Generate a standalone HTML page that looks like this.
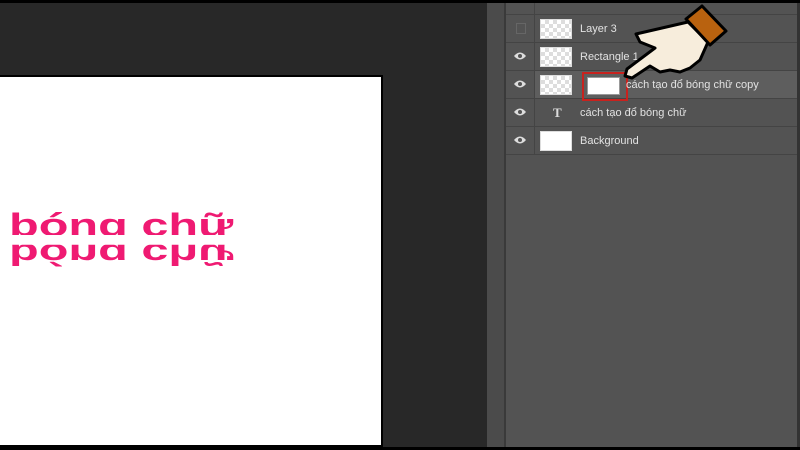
<!DOCTYPE html>
<html><head><meta charset="utf-8"><style>
*{margin:0;padding:0;box-sizing:border-box}
body{width:800px;height:450px;overflow:hidden;background:#000;position:relative;font-family:"Liberation Sans",sans-serif}
.a{position:absolute}
.row{position:absolute;left:506px;width:291px;height:28px;border-bottom:1px solid #444}
.eye{position:absolute;left:0;top:0;width:29px;height:27px;border-right:1px solid #444}
.th{position:absolute;top:4px;width:32px;height:20px;border:1px solid #ddd;background:
repeating-conic-gradient(#ddd 0 25%,#fff 0 50%) 0 0/8px 8px}
.lbl{position:absolute;left:74px;top:8px;color:#e2e2e2;font-size:11px;white-space:nowrap}
.bt{position:absolute;left:9px;top:209px;color:#ef1a72;font-weight:bold;font-size:32px;line-height:32px;white-space:nowrap}
</style></head><body>
<div class="a" style="left:0;top:3px;width:487px;height:444px;background:#282828"></div>
<div class="a" style="left:0;top:75px;width:383px;height:372px;background:#fff;border:2px solid #000;border-left:none"></div>
<div class="bt" style="transform:scaleX(1.52);transform-origin:0 0;clip-path:inset(0 0 6px 0)">bóng chữ</div>
<div class="bt" style="transform:scale(1.52,-0.95);transform-origin:0 31px;clip-path:inset(0 0 6px 0)">bóng chữ</div>
<div class="a" style="left:487px;top:3px;width:17px;height:444px;background:#4b4b4b"></div>
<div class="a" style="left:504px;top:3px;width:2px;height:444px;background:#3a3a3a"></div>
<div class="a" style="left:506px;top:3px;width:291px;height:444px;background:#535353"></div>
<div class="a" style="left:797px;top:3px;width:3px;height:444px;background:#333"></div>
<div class="row" style="top:3px;height:12px"><div class="eye" style="height:11px"></div></div>
<div class="row" style="top:15px"><div class="eye"><div class="a" style="left:10px;top:8px;width:10px;height:11px;border:1px solid #666"></div></div><div class="th" style="left:34px"></div><div class="lbl">Layer 3</div></div>
<div class="row" style="top:43px"><div class="eye"><svg class="a" style="left:7px;top:8px" width="14" height="10"><path d="M1 5Q7-2 13 5Q7 12 1 5Z" fill="#ddd"/><circle cx="7" cy="5" r="2" fill="#535353"/></svg></div><div class="th" style="left:34px"></div><div class="lbl">Rectangle 1</div></div>
<div class="row" style="top:71px;background:#5e5e5e"><div class="eye" style="background:#535353"><svg class="a" style="left:7px;top:8px" width="14" height="10"><path d="M1 5Q7-2 13 5Q7 12 1 5Z" fill="#ddd"/><circle cx="7" cy="5" r="2" fill="#535353"/></svg></div><div class="th" style="left:34px"></div><div class="a" style="left:81px;top:6px;width:33px;height:18px;background:#fff;border:1px solid #999"></div><div class="a" style="left:76px;top:1px;width:46px;height:29px;border:2px solid #c8221e"></div><div class="lbl" style="left:120px">cách tạo đổ bóng chữ copy</div></div>
<div class="row" style="top:99px"><div class="eye"><svg class="a" style="left:7px;top:8px" width="14" height="10"><path d="M1 5Q7-2 13 5Q7 12 1 5Z" fill="#ddd"/><circle cx="7" cy="5" r="2" fill="#535353"/></svg></div><div class="a" style="left:47px;top:6px;color:#ddd;font-family:'Liberation Serif',serif;font-weight:bold;font-size:13px">T</div><div class="lbl">cách tạo đổ bóng chữ</div></div>
<div class="row" style="top:127px"><div class="eye"><svg class="a" style="left:7px;top:8px" width="14" height="10"><path d="M1 5Q7-2 13 5Q7 12 1 5Z" fill="#ddd"/><circle cx="7" cy="5" r="2" fill="#535353"/></svg></div><div class="th" style="left:34px;background:#fff"></div><div class="lbl">Background</div></div>
<div class="a" style="left:0;top:0;width:800px;height:3px;background:#000"></div>
<svg class="a" style="left:0;top:0" width="800" height="450">
<path d="M636 34L688 22L708 42L700 60L690 68L680 72L670 70L660 72L650 66L632 78L625 76L627 69L655 48L640 42Z" fill="#f7eddc" stroke="#000" stroke-width="3" stroke-linejoin="round"/>
<path d="M686 19L702 6L726 31L710 45Z" fill="#b9620f" stroke="#000" stroke-width="3" stroke-linejoin="round"/>
</svg>
</body></html>
